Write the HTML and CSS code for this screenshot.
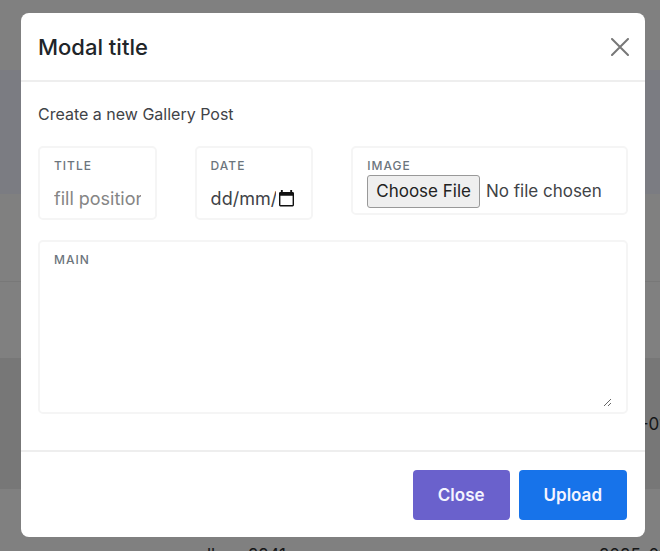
FILE: index.html
```html
<!DOCTYPE html>
<html lang="en-GB">
<head>
<meta charset="utf-8">
<title>Gallery</title>
<meta name="viewport" content="width=device-width, initial-scale=1">
<link rel="stylesheet" href="styles.css">
</head>
<body>
<div class="page" aria-hidden="true">
  <div class="row row-top"></div>
  <div class="row row-head"></div>
  <div class="row row-tools"></div>
  <div class="row row-filter"></div>
  <div class="row row-entry row-odd"><span></span><span>2025-01</span></div>
  <div class="row row-entry"><span>gallery-2241</span><span>2025-01</span></div>
</div>
<div class="backdrop">
  <form class="modal" role="dialog" aria-labelledby="modal-title">
    <header class="modal-header">
      <h1 class="modal-title" id="modal-title">Modal title</h1>
      <button class="dismiss" type="button" aria-label="Dismiss">
        <svg viewBox="0 0 18 18" width="18" height="18"><path d="M1 1 17 17M17 1 1 17" fill="none" stroke="currentColor" stroke-width="2" stroke-linecap="round"/></svg>
      </button>
    </header>
    <div class="modal-body">
      <p class="intro">Create a new Gallery Post</p>
      <div class="fields">
        <div class="field">
          <label for="title">Title</label>
          <input class="control" id="title" type="text" placeholder="fill position">
        </div>
        <div class="field">
          <label for="date">Date</label>
          <div class="date">
            <input class="control control-date" id="date" type="text" placeholder="dd/mm/yyyy">
            <button class="picker" type="button" aria-label="Show date picker">
              <svg viewBox="0 0 16 18" width="15" height="17"><path d="M2 0h2v2h8V0h2v2h.5q1.500 0 1.500 1.500v12.500q0 1.500-1.500 1.500h-13q-1.500 0-1.500-1.500v-12.500q0-1.500 1.500-1.500h.5zM1.500 6v10h13v-10z" fill="currentColor" fill-rule="evenodd"/></svg>
            </button>
          </div>
        </div>
        <div class="field">
          <label for="image">Image</label>
          <input class="file" id="image" type="file">
        </div>
        <div class="field field-wide">
          <label for="main">Main</label>
          <textarea class="area" id="main"></textarea>
        </div>
      </div>
    </div>
    <footer class="modal-footer">
      <button class="btn btn-close" type="button">Close</button>
      <button class="btn btn-upload" type="submit">Upload</button>
    </footer>
  </form>
</div>
</body>
</html>
```

FILE: styles.css
```css
* { box-sizing: border-box; }

body {
  margin: 0;
  background: #808080;
  color: #212529;
  font: 16px/24px Inter, "Liberation Sans", sans-serif;
}

button, input, textarea { font: inherit; color: inherit; }

/* Table behind the dialog */
.page {
  height: 100vh;
  overflow: hidden;
  color: #151617;
  font-size: 17px;
}
.row-top { height: 70px; }
.row-head { height: 124px; background: #7b7c82; }
.row-tools { height: 88px; border-bottom: 1px solid #787878; }
.row-filter { height: 76px; }
.row-entry {
  display: grid;
  grid-template-columns: 412px 1fr;
  align-items: center;
  height: 131px;
  padding-left: 187px;
  white-space: nowrap;
}
.row-odd { background: #777; }

/* Dialog */
.backdrop {
  position: fixed;
  inset: 0;
  padding: 13px 15px 15px 21px;
}
.modal {
  background: #fff;
  border-radius: 8px;
}
.modal-header {
  display: flex;
  align-items: center;
  justify-content: space-between;
  padding: 19px 16px 18px 17px;
  border-bottom: 2px solid #eee;
}
.modal-title {
  margin: 0;
  font-size: 22px;
  font-weight: 500;
  line-height: 30px;
}
.dismiss, .picker {
  display: flex;
  padding: 0;
  border: 0;
  background: none;
}
.dismiss { color: #777; }
.modal-body { padding: 19px 17px 36px; }
.intro {
  margin: 0 0 19px;
  color: #3f4347;
  line-height: 26px;
}
.fields {
  display: grid;
  grid-template-columns: minmax(0, 3fr) minmax(0, 3fr) minmax(0, 7fr);
  gap: 20px 38px;
  align-items: start;
}
.field {
  display: flex;
  flex-direction: column;
  padding: 9px 14px 5px;
  border: 2px solid #f5f5f5;
  border-radius: 5px;
}
.field-wide { grid-column: 1 / -1; }
.field label {
  color: #6c757d;
  font-size: 12px;
  font-weight: 500;
  letter-spacing: 1px;
  line-height: 18px;
  text-transform: uppercase;
}
.control {
  width: 100%;
  min-width: 0;
  height: 38px;
  padding: 8px 0 0;
  border: 0;
  outline: 0;
  background: none;
  font-size: 18px;
}
.control::placeholder { color: #858585; }
.date {
  display: flex;
  align-items: center;
  gap: 3px;
  padding-right: 3px;
}
.control-date::placeholder { color: #3f4347; }
.picker {
  padding-top: 8px;
  color: #111;
}
.file {
  width: 100%;
  color: #3f4347;
  font-size: 17px;
  line-height: 27px;
}
.file::file-selector-button {
  margin: 0 6px 0 0;
  padding: 2px 8px;
  border: 1px solid #999;
  border-radius: 3px;
  background: #efefef;
  color: #222;
  font: inherit;
}
.area {
  display: block;
  width: 100%;
  height: 138px;
  padding: 4px 0;
  border: 0;
  outline: 0;
  resize: vertical;
  background: none;
}
.modal-footer {
  display: flex;
  justify-content: flex-end;
  gap: 9px;
  padding: 18px 18px 17px;
  border-top: 2px solid #eee;
}
.btn {
  padding: 13px 25px;
  border: 0;
  border-radius: 4px;
  color: #f4f4ff;
  font-size: 17px;
  font-weight: 600;
}
.btn-close { background: #6a61cc; }
.btn-upload { background: #1773ea; }
```
